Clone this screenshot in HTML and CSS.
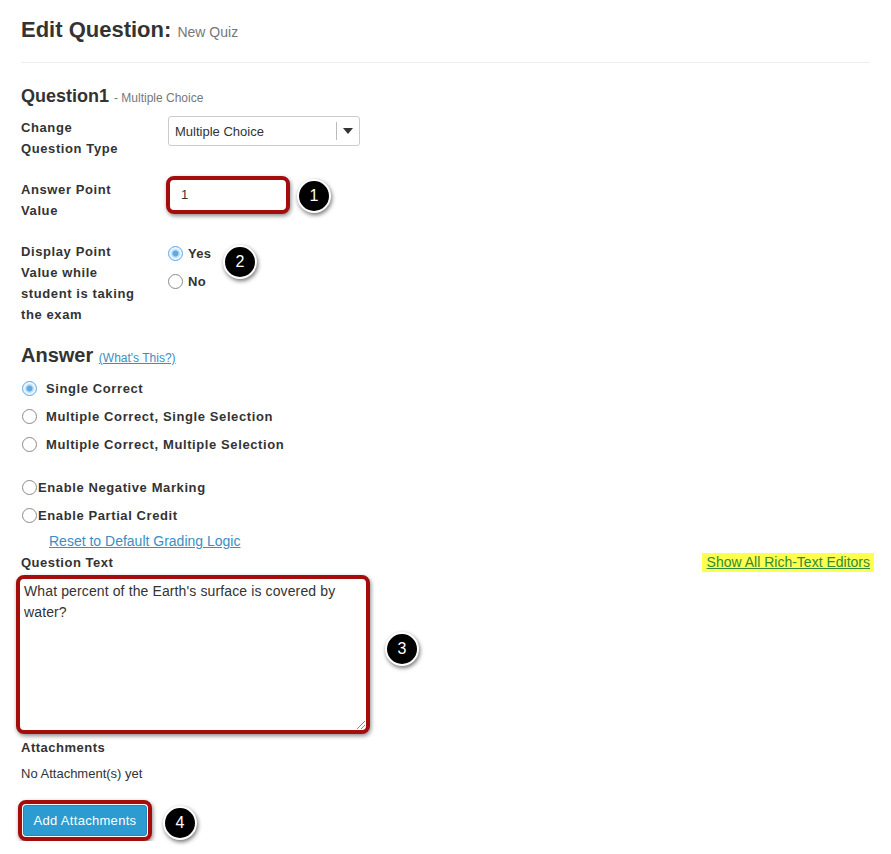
FILE: index.html
```html
<!DOCTYPE html>
<html>
<head>
<meta charset="utf-8">
<link rel="stylesheet" href="styles.css">
</head>
<body>
<div class="page">
  <header class="page-head">
    <h1 class="title">Edit Question: <small>New Quiz</small></h1>
  </header>

  <h2 class="qtitle">Question1 <small>- Multiple Choice</small></h2>

  <div class="form-grid">
    <div class="label">Change<br>Question Type</div>
    <div class="ctrl">
      <div class="select"><span class="sel-text">Multiple Choice</span><span class="sel-btn"><span class="caret"></span></span></div>
    </div>

    <div class="label">Answer Point<br>Value</div>
    <div class="ctrl">
      <div class="hl hl-input"><div class="field">1</div></div>
    </div>

    <div class="label">Display Point<br>Value while<br>student is taking<br>the exam</div>
    <div class="ctrl radios-col">
      <div class="radio-row"><span class="radio checked"></span><span class="rlabel">Yes</span></div>
      <div class="radio-row"><span class="radio"></span><span class="rlabel">No</span></div>
    </div>
  </div>

  <h2 class="answer">Answer <a class="whats">(What's This?)</a></h2>

  <div class="opts">
    <div class="opt"><span class="radio checked"></span><span class="olabel">Single Correct</span></div>
    <div class="opt"><span class="radio"></span><span class="olabel">Multiple Correct, Single Selection</span></div>
    <div class="opt"><span class="radio"></span><span class="olabel">Multiple Correct, Multiple Selection</span></div>
  </div>

  <div class="opts2">
    <div class="opt tight"><span class="radio"></span><span class="olabel">Enable Negative Marking</span></div>
    <div class="opt tight"><span class="radio"></span><span class="olabel">Enable Partial Credit</span></div>
    <a class="reset">Reset to Default Grading Logic</a>
  </div>

  <div class="qt-row">
    <span class="bold-label">Question Text</span>
    <a class="show-all">Show All Rich-Text Editors</a>
  </div>

  <div class="hl hl-text">
    <div class="textarea">What percent of the Earth's surface is covered by water?<span class="grip"></span></div>
  </div>

  <div class="bold-label attach-label">Attachments</div>
  <div class="noattach">No Attachment(s) yet</div>

  <div class="hl hl-btn"><button class="btn">Add Attachments</button></div>
</div>

<span class="badge b1">1</span>
<span class="badge b2">2</span>
<span class="badge b3">3</span>
<span class="badge b4">4</span>
</body>
</html>
```

FILE: styles.css
```css
html, body { margin: 0; padding: 0; background: #fff; }
body {
  font-family: "Liberation Sans", Arial, sans-serif;
  color: #333;
  font-size: 13px;
}
.page { padding: 0 21px; position: relative; }

.page-head {
  padding-top: 15px;
  padding-bottom: 15px;
  border-bottom: 1px solid #eee;
}
.title {
  margin: 0;
  font-size: 22px;
  line-height: 30px;
  font-weight: bold;
  color: #333;
}
.title small {
  font-size: 14px;
  font-weight: normal;
  color: #777;
}

.qtitle {
  margin: 21px 0 0;
  font-size: 18px;
  line-height: 24px;
  font-weight: bold;
}
.qtitle small {
  font-size: 12px;
  font-weight: normal;
  color: #777;
}

.form-grid {
  display: grid;
  grid-template-columns: 147px auto;
  row-gap: 20px;
  margin-top: 7px;
}
.label {
  font-weight: bold;
  font-size: 13px;
  line-height: 21px;
  letter-spacing: 0.6px;
}
.ctrl { display: flex; align-items: flex-start; }

.select {
  width: 190px;
  height: 28px;
  border: 1px solid #ccc;
  border-radius: 3px;
  display: flex;
  align-items: center;
  margin-top: -1px;
}
.sel-text { flex: 1; padding-left: 6px; font-size: 13px; color: #333; }
.sel-btn {
  width: 22px;
  height: 18px;
  border-left: 1px solid #bbb;
  display: flex;
  align-items: center;
  justify-content: center;
}
.caret {
  width: 0; height: 0;
  border-left: 5px solid transparent;
  border-right: 5px solid transparent;
  border-top: 6px solid #333;
}

.hl {
  border: 4px solid #a50d0d;
  border-radius: 8px;
  box-shadow: 1px 2px 4px rgba(0,0,0,0.45);
  background: #fff;
}
.hl-input {
  width: 116px;
  height: 30px;
  margin-top: -3px;
  margin-left: -2px;
}
.field {
  padding-left: 11px;
  line-height: 30px;
  font-size: 13px;
}

.radios-col { flex-direction: column; margin-top: 2px; }
.radio-row { display: flex; align-items: center; height: 28px; margin-top: -4px; }
.radio-row + .radio-row { margin-top: 0; }
.radio {
  box-sizing: border-box;
  width: 15px; height: 15px;
  border: 1px solid #8a8a8a;
  border-radius: 50%;
  background: #fff;
  display: inline-block;
  flex: none;
  position: relative;
}
.radio.checked {
  border-color: #5aa9e6;
  background: radial-gradient(circle, #62a9e0 0 2.5px, #bfe0f8 3.5px 4px, #eaf5fd 5px);
}
.rlabel { font-weight: bold; margin-left: 5px; font-size: 13px; letter-spacing: 0.3px; }

.answer {
  margin: 17px 0 0;
  font-size: 20px;
  line-height: 26px;
  font-weight: bold;
}
.whats {
  font-size: 12px;
  font-weight: normal;
  color: #3c8dc5;
  text-decoration: underline;
}

.opts { margin-top: 3px; }
.opt { display: flex; align-items: center; height: 28px; }
.opt .radio { margin-left: 1px; }
.olabel {
  font-weight: bold;
  font-size: 13px;
  letter-spacing: 0.6px;
  margin-left: 9px;
}
.opt.tight .olabel { margin-left: 1px; }

.opts2 { margin-top: 15px; }
.reset {
  display: block;
  margin-left: 28px;
  line-height: 26px;
  font-size: 14px;
  color: #3c8dc5;
  text-decoration: underline;
  margin-top: -1px;
}

.qt-row {
  display: flex;
  justify-content: space-between;
  align-items: center;
  height: 21px;
  margin-top: -2px;
}
.bold-label { font-weight: bold; font-size: 13px; letter-spacing: 0.5px; }
.show-all {
  background: #ffff4d;
  color: #2f8a3a;
  text-decoration: underline;
  font-size: 14px;
  padding: 1px 4px 2px 5px;
  margin-right: -4px;
}

.hl-text {
  width: 346px;
  height: 151px;
  margin-left: -5px;
  margin-top: 2px;
}
.textarea {
  position: relative;
  height: 100%;
  padding: 2px 4px;
  box-sizing: border-box;
  font-size: 14px;
  letter-spacing: 0.12px;
  line-height: 21px;
  color: #333;
}
.grip {
  position: absolute;
  right: 1px;
  bottom: 1px;
  width: 8px;
  height: 8px;
  background: linear-gradient(135deg, transparent 45%, #888 45% 52%, transparent 52% 70%, #888 70% 77%, transparent 77%);
}

.attach-label { margin-top: 3px; line-height: 21px; }
.noattach { margin-top: 5px; line-height: 21px; }

.hl-btn {
  display: inline-block;
  margin-top: 16px;
  margin-left: -3px;
  padding: 1px;
  border-radius: 8px;
}
.btn {
  display: block;
  background: #2b9bd1;
  color: #fff;
  border: 1px solid #2486b8;
  border-radius: 3px;
  font-family: "Liberation Sans", Arial, sans-serif;
  font-size: 13px;
  letter-spacing: 0.3px;
  height: 31px;
  width: 124px;
  padding: 0;
}

.badge {
  position: absolute;
  box-sizing: border-box;
  width: 34px; height: 34px;
  border-radius: 50%;
  background: #000;
  border: 2px solid #fff;
  box-shadow: 1px 2px 4px rgba(0,0,0,0.55);
  color: #fff;
  font-family: "Liberation Sans", Arial, sans-serif;
  font-size: 16px;
  display: flex;
  align-items: center;
  justify-content: center;
}
.b1 { left: 297px; top: 179px; }
.b2 { left: 223px; top: 245px; }
.b3 { left: 385px; top: 632px; }
.b4 { left: 163px; top: 806px; }
```
